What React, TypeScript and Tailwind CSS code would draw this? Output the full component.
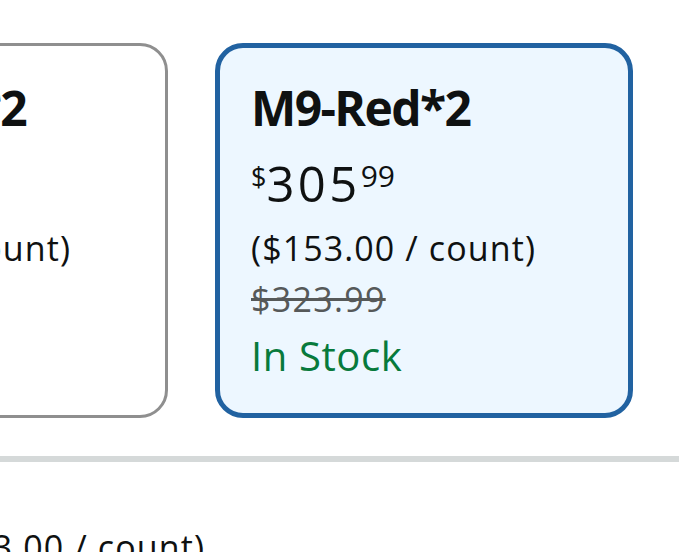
interface Variant {
  name: string;
  whole: string;
  fraction: string;
  unit: string;
  listPrice?: string;
  selected?: boolean;
}

const variants: Variant[] = [
  { name: 'M9-Gray*2', whole: '285', fraction: '99', unit: '($143.00 / count)' },
  { name: 'M9-Red*2', whole: '305', fraction: '99', unit: '($153.00 / count)', listPrice: '$323.99', selected: true },
  { name: 'M9-Blue*2', whole: '305', fraction: '99', unit: '($153.00 / count)' }
];

function VariantCard({ v }: { v: Variant }) {
  return (
    <div
      className={
        v.selected
          ? 'shrink-0 w-[418px] h-[375px] rounded-[28px] border-[5px] border-[#2162a1] bg-[#edf7ff] pl-[31px] pt-[32px]'
          : 'shrink-0 w-[418px] h-[375px] rounded-[28px] border-[3px] border-[#8f8f8f] bg-white pl-[33px] pt-[34px]'
      }
    >
      <div className="text-[48px] leading-[56px] font-bold tracking-[-1.6px] text-[#0f1111] whitespace-nowrap">
        {v.name}
      </div>
      <div className="mt-[17px] flex items-start leading-[60px] text-[#0f1111]">
        <span className="text-[27px] leading-[40px] mt-[4px]">$</span>
        <span className="text-[49px] leading-[60px] tracking-[3.4px]">{v.whole}</span>
        <span className="text-[30px] leading-[40px] mt-[3px]">{v.fraction}</span>
      </div>
      <div className="mt-[10px] text-[34px] leading-[51px] tracking-[1.1px] text-[#0f1111] whitespace-nowrap">
        {v.unit}
      </div>
      <div className="text-[34px] leading-[51px] tracking-[1.3px] text-[#565959] line-through whitespace-nowrap h-[51px]">
        {v.listPrice}
      </div>
      <div className="text-[40px] leading-[62px] tracking-[0.6px] text-[#077a3c]">In Stock</div>
    </div>
  );
}

export default function App() {
  return (
    <div
      className="w-[679px] h-[552px] overflow-hidden bg-white"
      style={{ fontFamily: '"Open Sans", "Noto Sans", sans-serif' }}
    >
      <div className="pt-[43px] flex gap-[47px] -ml-[250px]">
        {variants.map((v) => (
          <VariantCard key={v.name} v={v} />
        ))}
      </div>
      <div className="mt-[38px] h-[6px] bg-[#d5d9d9]" />
      <div className="mt-[60px] -ml-[80px] text-[34px] leading-[51px] tracking-[1.1px] text-[#0f1111] whitespace-nowrap">
        ($153.00 / count)
      </div>
    </div>
  );
}
